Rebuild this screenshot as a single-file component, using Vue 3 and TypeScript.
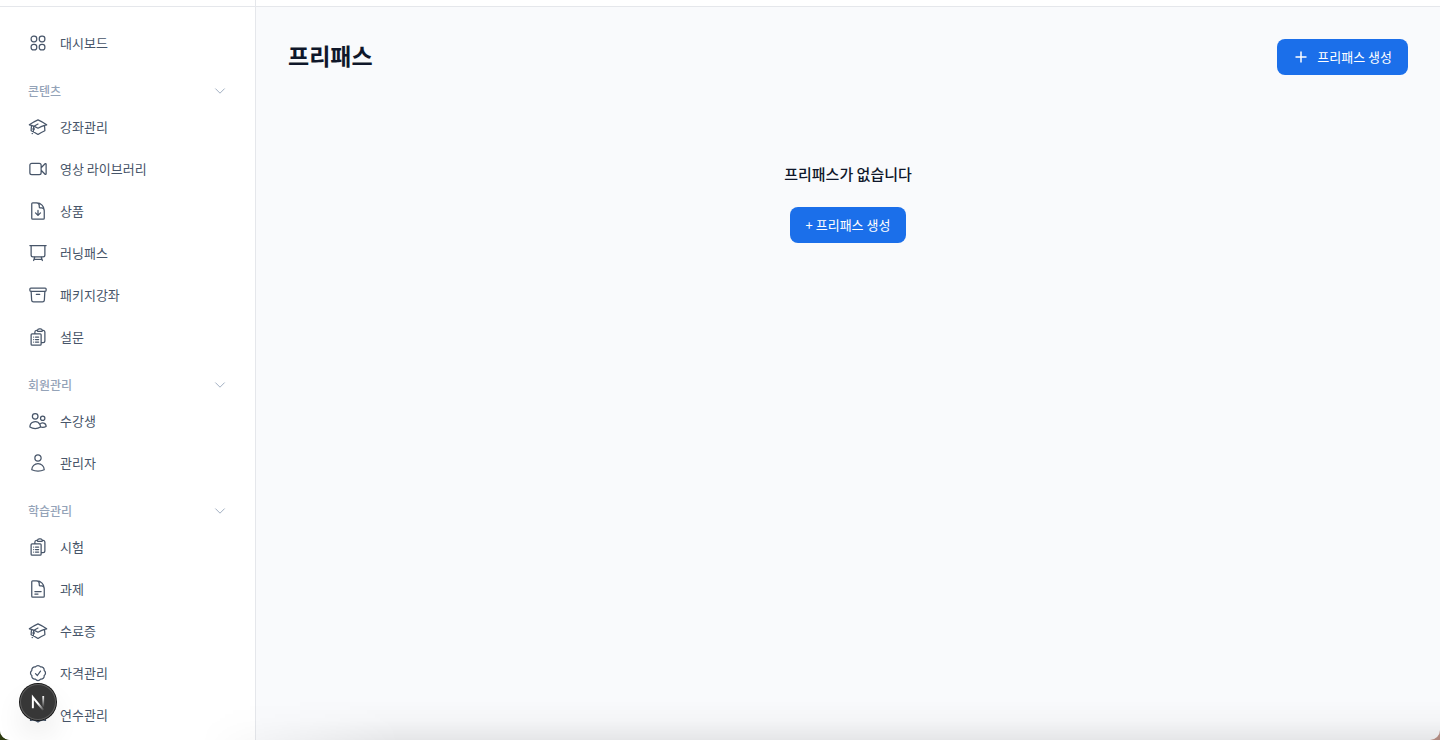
<script setup lang="ts">
import { ref } from 'vue'

type IconName =
  | 'grid' | 'cap' | 'video' | 'download' | 'board' | 'archive'
  | 'clipboard' | 'users' | 'user' | 'document' | 'badge' | 'book'

interface Item { label: string; icon: IconName }
interface Section { title: string; items: Item[] }

const icons: Record<IconName, string> = {
  grid: 'M3.75 6.75a3 3 0 0 1 3-3h.75a3 3 0 0 1 3 3v.75a3 3 0 0 1-3 3h-.75a3 3 0 0 1-3-3v-.75ZM3.75 16.5a3 3 0 0 1 3-3h.75a3 3 0 0 1 3 3v.75a3 3 0 0 1-3 3h-.75a3 3 0 0 1-3-3v-.75ZM13.5 6.75a3 3 0 0 1 3-3h.75a3 3 0 0 1 3 3v.75a3 3 0 0 1-3 3h-.75a3 3 0 0 1-3-3v-.75ZM13.5 16.5a3 3 0 0 1 3-3h.75a3 3 0 0 1 3 3v.75a3 3 0 0 1-3 3h-.75a3 3 0 0 1-3-3v-.75Z',
  cap: 'M4.26 10.147a60.438 60.438 0 0 0-.491 6.347A48.62 48.62 0 0 1 12 20.904a48.62 48.62 0 0 1 8.232-4.41 60.46 60.46 0 0 0-.491-6.347M4.26 10.147a50.636 50.636 0 0 0-2.658-.813A59.906 59.906 0 0 1 12 3.493a59.903 59.903 0 0 1 10.399 5.84c-.896.248-1.783.52-2.658.814A50.717 50.717 0 0 0 12 13.489a50.702 50.702 0 0 0-7.74-3.342M6.75 15a.75.75 0 1 0 0-1.5.75.75 0 0 0 0 1.5Zm0 0v-3.675A55.378 55.378 0 0 1 12 8.443m-7.007 11.55A5.981 5.981 0 0 0 6.75 15.75v-1.5',
  video: 'm15.75 10.5 4.72-4.72a.75.75 0 0 1 1.28.53v11.38a.75.75 0 0 1-1.28.53l-4.72-4.72M4.5 18.75h9a2.25 2.25 0 0 0 2.25-2.25v-9a2.25 2.25 0 0 0-2.25-2.25h-9A2.25 2.25 0 0 0 2.25 7.5v9a2.25 2.25 0 0 0 2.25 2.25Z',
  download: 'M19.5 14.25v-2.625a3.375 3.375 0 0 0-3.375-3.375h-1.5A1.125 1.125 0 0 1 13.5 7.125v-1.5a3.375 3.375 0 0 0-3.375-3.375H8.25m.75 12 3 3m0 0 3-3m-3 3v-6m-1.5-9H5.625c-.621 0-1.125.504-1.125 1.125v17.25c0 .621.504 1.125 1.125 1.125h12.75c.621 0 1.125-.504 1.125-1.125V11.25a9 9 0 0 0-9-9Z',
  board: 'M3.75 3v11.25A2.25 2.25 0 0 0 6 16.5h2.25M3.75 3h-1.5m1.5 0h16.5m0 0h1.5m-1.5 0v11.25A2.25 2.25 0 0 1 18 16.5h-2.25m-7.5 0h7.5m-7.5 0-1 3m8.5-3 1 3m0 0 .5 1.5m-.5-1.5h-9.5m0 0-.5 1.5',
  archive: 'm20.25 7.5-.625 10.632a2.25 2.25 0 0 1-2.247 2.118H6.622a2.25 2.25 0 0 1-2.247-2.118L3.75 7.5M10 11.25h4M3.375 7.5h17.25c.621 0 1.125-.504 1.125-1.125v-1.5c0-.621-.504-1.125-1.125-1.125H3.375c-.621 0-1.125.504-1.125 1.125v1.5c0 .621.504 1.125 1.125 1.125Z',
  clipboard: 'M9 12h3.75M9 15h3.75M9 18h3.75m3 .75H18a2.25 2.25 0 0 0 2.25-2.25V6.108c0-1.135-.845-2.098-1.976-2.192a48.424 48.424 0 0 0-1.123-.08m-5.801 0c-.065.21-.1.433-.1.664 0 .414.336.75.75.75h4.5a.75.75 0 0 0 .75-.75 2.25 2.25 0 0 0-.1-.664m-5.8 0A2.251 2.251 0 0 1 13.5 2.25H15c1.012 0 1.867.668 2.15 1.586m-5.8 0c-.376.023-.75.05-1.124.08C9.095 4.01 8.25 4.973 8.25 6.108V8.25m0 0H4.875c-.621 0-1.125.504-1.125 1.125v11.25c0 .621.504 1.125 1.125 1.125h9.75c.621 0 1.125-.504 1.125-1.125V9.375c0-.621-.504-1.125-1.125-1.125H8.25ZM6.75 12h.008v.008H6.75V12Zm0 3h.008v.008H6.75V15Zm0 3h.008v.008H6.75V18Z',
  users: 'M15 19.128a9.38 9.38 0 0 0 2.625.372 9.337 9.337 0 0 0 4.121-.952 4.125 4.125 0 0 0-7.533-2.493M15 19.128v-.003c0-1.113-.285-2.16-.786-3.07M15 19.128v.106A12.318 12.318 0 0 1 8.624 21c-2.331 0-4.512-.645-6.374-1.766l-.001-.109a6.375 6.375 0 0 1 11.964-3.07M12 6.375a3.375 3.375 0 1 1-6.75 0 3.375 3.375 0 0 1 6.75 0Zm8.25 2.25a2.625 2.625 0 1 1-5.25 0 2.625 2.625 0 0 1 5.25 0Z',
  user: 'M15.75 6a3.75 3.75 0 1 1-7.5 0 3.75 3.75 0 0 1 7.5 0ZM4.501 20.118a7.5 7.5 0 0 1 14.998 0A17.933 17.933 0 0 1 12 21.75c-2.676 0-5.216-.584-7.499-1.632Z',
  document: 'M19.5 14.25v-2.625a3.375 3.375 0 0 0-3.375-3.375h-1.5A1.125 1.125 0 0 1 13.5 7.125v-1.5a3.375 3.375 0 0 0-3.375-3.375H8.25m0 12.75h7.5m-7.5 3H12M10.5 2.25H5.625c-.621 0-1.125.504-1.125 1.125v17.25c0 .621.504 1.125 1.125 1.125h12.75c.621 0 1.125-.504 1.125-1.125V11.25a9 9 0 0 0-9-9Z',
  badge: 'M9 12.75 11.25 15 15 9.75M21 12c0 1.268-.63 2.39-1.593 3.068a3.745 3.745 0 0 1-1.043 3.296 3.745 3.745 0 0 1-3.296 1.043A3.745 3.745 0 0 1 12 21c-1.268 0-2.39-.63-3.068-1.593a3.746 3.746 0 0 1-3.296-1.043 3.745 3.745 0 0 1-1.043-3.296A3.745 3.745 0 0 1 3 12c0-1.268.63-2.39 1.593-3.068a3.745 3.745 0 0 1 1.043-3.296 3.746 3.746 0 0 1 3.296-1.043A3.746 3.746 0 0 1 12 3c1.268 0 2.39.63 3.068 1.593a3.746 3.746 0 0 1 3.296 1.043 3.746 3.746 0 0 1 1.043 3.296A3.745 3.745 0 0 1 21 12Z',
  book: 'M12 6.042A8.967 8.967 0 0 0 6 3.75c-1.052 0-2.062.18-3 .512v14.25A8.987 8.987 0 0 1 6 18c2.305 0 4.408.867 6 2.292m0-14.25a8.966 8.966 0 0 1 6-2.292c1.052 0 2.062.18 3 .512v14.25A8.987 8.987 0 0 0 18 18a8.967 8.967 0 0 0-6 2.292m0-14.25v14.25',
}

const sections: Section[] = [
  {
    title: '콘텐츠',
    items: [
      { label: '강좌관리', icon: 'cap' },
      { label: '영상 라이브러리', icon: 'video' },
      { label: '상품', icon: 'download' },
      { label: '러닝패스', icon: 'board' },
      { label: '패키지강좌', icon: 'archive' },
      { label: '설문', icon: 'clipboard' },
    ],
  },
  {
    title: '회원관리',
    items: [
      { label: '수강생', icon: 'users' },
      { label: '관리자', icon: 'user' },
    ],
  },
  {
    title: '학습관리',
    items: [
      { label: '시험', icon: 'clipboard' },
      { label: '과제', icon: 'document' },
      { label: '수료증', icon: 'cap' },
      { label: '자격관리', icon: 'badge' },
      { label: '연수관리', icon: 'book' },
    ],
  },
]

const closed = ref<string[]>([])
function toggle(title: string): void {
  closed.value = closed.value.includes(title)
    ? closed.value.filter((t) => t !== title)
    : [...closed.value, title]
}
</script>

<template>
  <div class="desktop">
    <div class="window">
      <aside class="sidebar">
        <div class="strip"></div>
        <nav class="nav">
          <a class="item" href="#">
            <svg class="icon" viewBox="0 0 24 24" aria-hidden="true"><path :d="icons.grid" /></svg>
            <span>대시보드</span>
          </a>
          <section v-for="section in sections" :key="section.title" class="section">
            <button
              class="section-toggle"
              type="button"
              :aria-expanded="!closed.includes(section.title)"
              @click="toggle(section.title)"
            >
              <span>{{ section.title }}</span>
              <svg class="chevron" viewBox="0 0 24 24" aria-hidden="true">
                <path d="m19.5 8.25-7.5 7.5-7.5-7.5" />
              </svg>
            </button>
            <template v-if="!closed.includes(section.title)">
              <a v-for="item in section.items" :key="item.label" class="item" href="#">
                <svg class="icon" viewBox="0 0 24 24" aria-hidden="true"><path :d="icons[item.icon]" /></svg>
                <span>{{ item.label }}</span>
              </a>
            </template>
          </section>
        </nav>
      </aside>
      <div class="page">
        <div class="strip"></div>
        <main class="content">
          <header class="head">
            <h1>프리패스</h1>
            <button class="primary" type="button">
              <svg class="plus" viewBox="0 0 16 16" aria-hidden="true"><path d="M8 2.5v11M2.5 8h11" /></svg>
              <span>프리패스 생성</span>
            </button>
          </header>
          <section class="empty">
            <h2>프리패스가 없습니다</h2>
            <button class="primary" type="button">+ 프리패스 생성</button>
          </section>
        </main>
      </div>
      <div class="shade"></div>
    </div>
    <button class="devtools" type="button" aria-label="Next.js">
      <svg viewBox="0 0 40 40" aria-hidden="true">
        <defs>
          <linearGradient id="diag" gradientUnits="userSpaceOnUse" x1="21" y1="21" x2="27" y2="29">
            <stop offset="0" stop-color="#fff" />
            <stop offset="1" stop-color="#fff" stop-opacity="0" />
          </linearGradient>
          <linearGradient id="stem" gradientUnits="userSpaceOnUse" x1="26" y1="13" x2="26" y2="26">
            <stop offset="0" stop-color="#fff" />
            <stop offset="1" stop-color="#fff" stop-opacity="0" />
          </linearGradient>
        </defs>
        <path d="M14.3 27V14.8L26 29" fill="none" stroke="url(#diag)" stroke-width="2.2" />
        <path d="M25.8 13.3v12.5" fill="none" stroke="url(#stem)" stroke-width="2" />
      </svg>
    </button>
  </div>
</template>

<style>
body {
  margin: 0;
}
</style>

<style scoped>
* {
  box-sizing: border-box;
}

.desktop {
  height: 100vh;
  background: linear-gradient(90deg, #2c3a10 0%, #2c3a10 50%, #b08a80 50%, #b08a80 100%);
  font-family: 'Noto Sans CJK KR', sans-serif;
  position: relative;
}

.window {
  position: relative;
  display: flex;
  height: 100%;
  overflow: hidden;
  border-radius: 0 0 10px 10px;
  background: #f9fafc;
}

.sidebar {
  width: 256px;
  flex: none;
  background: #fff;
  border-right: 1px solid #e5e7eb;
}

.strip {
  height: 7px;
  background: #fff;
  border-bottom: 1px solid #e5e7eb;
}

.nav {
  display: flex;
  flex-direction: column;
  gap: 14px;
  padding: 16px;
}

.section {
  display: flex;
  flex-direction: column;
  gap: 2px;
}

.item {
  display: flex;
  align-items: center;
  gap: 12px;
  height: 40px;
  padding: 0 12px;
  border-radius: 8px;
  color: #475569;
  font-size: 13px;
  line-height: 20px;
  text-decoration: none;
}

.icon {
  width: 20px;
  height: 20px;
  flex: none;
}

.icon path,
.chevron path {
  fill: none;
  stroke: currentColor;
  stroke-width: 1.5;
  stroke-linecap: round;
  stroke-linejoin: round;
}

.section-toggle {
  display: flex;
  align-items: center;
  justify-content: space-between;
  height: 28px;
  padding: 0 12px;
  border: 0;
  background: none;
  color: #94a3b8;
  font-family: inherit;
  font-size: 12px;
  font-weight: 500;
  line-height: 16px;
}

.chevron {
  width: 14px;
  height: 14px;
}

.page {
  flex: 1;
  min-width: 0;
}

.content {
  padding: 32px;
}

.head {
  display: flex;
  align-items: flex-start;
  justify-content: space-between;
}

h1 {
  margin: 0;
  color: #0f172a;
  font-size: 23px;
  font-weight: 700;
  line-height: 32px;
}

.primary {
  display: inline-flex;
  align-items: center;
  gap: 8px;
  height: 36px;
  padding: 0 16px;
  border: 0;
  border-radius: 8px;
  background: #1b6fea;
  color: #fff;
  font-family: inherit;
  font-size: 13px;
  font-weight: 400;
  line-height: 20px;
}

.plus {
  width: 16px;
  height: 16px;
}

.plus path {
  fill: none;
  stroke: currentColor;
  stroke-width: 1.5;
}

.empty {
  display: flex;
  flex-direction: column;
  align-items: center;
  gap: 22px;
  padding-top: 88px;
}

h2 {
  margin: 0;
  color: #0f172a;
  font-size: 15px;
  font-weight: 500;
  line-height: 22px;
}

.shade {
  position: absolute;
  right: 0;
  bottom: 0;
  left: 0;
  height: 40px;
  background: linear-gradient(rgba(0, 0, 0, 0), rgba(0, 0, 0, 0.02) 50%, rgba(0, 0, 0, 0.08));
  mask-image: linear-gradient(90deg, transparent 200px, #000 400px);
  pointer-events: none;
}

.devtools {
  position: absolute;
  bottom: 20px;
  left: 20px;
  width: 36px;
  height: 36px;
  padding: 0;
  border: 0;
  border-radius: 50%;
  background: #373737;
  box-shadow: 0 0 0 1px #111, inset 0 0 0 1px #5c5c5c, 0 16px 32px -8px rgba(0, 0, 0, 0.24);
}

.devtools svg {
  display: block;
  width: 36px;
  height: 36px;
}
</style>
